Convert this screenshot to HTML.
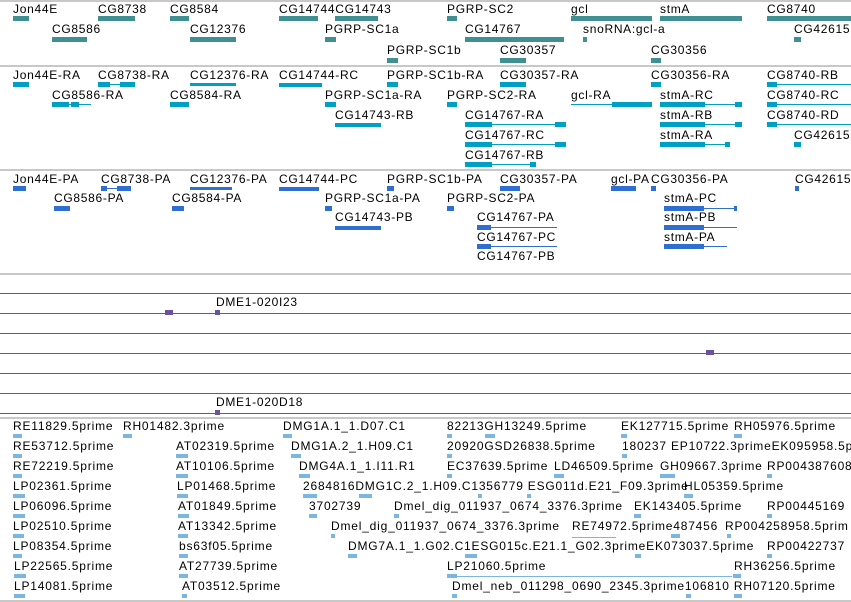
<!DOCTYPE html>
<html style="width:851px;height:602px;overflow:hidden"><head><meta charset="utf-8">
<style>
body{margin:0;width:851px;height:602px;background:#fff;position:relative;overflow:hidden;font-family:"Liberation Sans",sans-serif}
.l{position:absolute;font-size:12px;line-height:13px;white-space:nowrap;color:#000;letter-spacing:0.7px}
.e .l{letter-spacing:0.8px}
.b{position:absolute;height:5px}
.t1{background:#3f8f93}.t2{background:#00a0c4}.t3{background:#2f6fd2}.t5{background:#7ab6df}
.ln{position:absolute;height:1px}
.g{position:absolute;left:0;width:851px;height:2px;background:#c8c8c8}
.p{position:absolute;left:0;width:851px;height:1px;background:#6a52a0}
</style></head><body>
<div class="g" style="top:0"></div>
<div class="g" style="top:65px"></div>
<div class="g" style="top:169px"></div>
<div class="g" style="top:273px"></div>
<div class="g" style="top:417px"></div>
<div class="g" style="top:600px"></div>

<!-- track 1 -->
<div class="l" style="left:13px;top:3px">Jon44E</div><div class="b t1" style="left:13px;top:16px;width:16px"></div>
<div class="l" style="left:98px;top:3px">CG8738</div><div class="b t1" style="left:98px;top:16px;width:37px"></div>
<div class="l" style="left:170px;top:3px">CG8584</div><div class="b t1" style="left:170px;top:16px;width:19px"></div>
<div class="l" style="left:279px;top:3px">CG14744CG14743</div><div class="b t1" style="left:279px;top:16px;width:39px"></div><div class="b t1" style="left:335px;top:16px;width:43px"></div>
<div class="l" style="left:447px;top:3px">PGRP-SC2</div><div class="b t1" style="left:447px;top:16px;width:10px"></div>
<div class="l" style="left:571px;top:3px">gcl</div><div class="b t1" style="left:571px;top:16px;width:81px"></div>
<div class="l" style="left:660px;top:3px">stmA</div><div class="b t1" style="left:660px;top:16px;width:82px"></div>
<div class="l" style="left:767px;top:3px">CG8740</div><div class="b t1" style="left:767px;top:16px;width:84px"></div>
<div class="l" style="left:52px;top:23px">CG8586</div><div class="b t1" style="left:52px;top:37px;width:35px"></div>
<div class="l" style="left:190px;top:23px">CG12376</div><div class="b t1" style="left:190px;top:37px;width:46px"></div>
<div class="l" style="left:325px;top:23px">PGRP-SC1a</div><div class="b t1" style="left:325px;top:37px;width:11px"></div>
<div class="l" style="left:465px;top:23px">CG14767</div><div class="b t1" style="left:465px;top:37px;width:99px"></div>
<div class="l" style="left:583px;top:23px">snoRNA:gcl-a</div><div class="b t1" style="left:583px;top:37px;width:4px"></div>
<div class="l" style="left:794px;top:23px">CG42615</div><div class="b t1" style="left:794px;top:37px;width:7px"></div>
<div class="l" style="left:387px;top:44px">PGRP-SC1b</div><div class="b t1" style="left:387px;top:58px;width:11px"></div>
<div class="l" style="left:500px;top:44px">CG30357</div><div class="b t1" style="left:500px;top:58px;width:26px"></div>
<div class="l" style="left:651px;top:44px">CG30356</div><div class="b t1" style="left:651px;top:58px;width:10px"></div>

<!-- track 2 -->
<div class="l" style="left:13px;top:69px">Jon44E-RA</div><div class="b t2" style="left:13px;top:82px;width:16px"></div>
<div class="l" style="left:98px;top:69px">CG8738-RA</div><div class="b t2" style="left:98px;top:82px;width:12px"></div><div class="ln t2" style="left:110px;top:84px;width:10px"></div><div class="b t2" style="left:120px;top:82px;width:15px"></div>
<div class="l" style="left:190px;top:69px">CG12376-RA</div><div class="b t2" style="left:190px;top:83px;width:46px;height:3px"></div>
<div class="l" style="left:279px;top:69px">CG14744-RC</div><div class="b t2" style="left:279px;top:83px;width:43px;height:4px"></div>
<div class="l" style="left:387px;top:69px">PGRP-SC1b-RA</div><div class="b t2" style="left:387px;top:82px;width:11px"></div>
<div class="l" style="left:500px;top:69px">CG30357-RA</div><div class="b t2" style="left:500px;top:82px;width:26px"></div>
<div class="l" style="left:651px;top:69px">CG30356-RA</div><div class="b t2" style="left:651px;top:82px;width:10px"></div>
<div class="l" style="left:767px;top:69px">CG8740-RB</div><div class="b t2" style="left:767px;top:82px;width:10px"></div><div class="ln t2" style="left:777px;top:84px;width:74px"></div>
<div class="l" style="left:52px;top:89px">CG8586-RA</div><div class="b t2" style="left:52px;top:102px;width:17px"></div><div class="ln t2" style="left:69px;top:104px;width:22px"></div><div class="b t2" style="left:71px;top:102px;width:8px"></div>
<div class="l" style="left:170px;top:89px">CG8584-RA</div><div class="b t2" style="left:170px;top:102px;width:19px"></div>
<div class="l" style="left:325px;top:89px">PGRP-SC1a-RA</div><div class="b t2" style="left:325px;top:102px;width:11px"></div>
<div class="l" style="left:447px;top:89px">PGRP-SC2-RA</div><div class="b t2" style="left:447px;top:102px;width:10px"></div>
<div class="l" style="left:571px;top:89px">gcl-RA</div><div class="ln t2" style="left:571px;top:104px;width:81px"></div><div class="b t2" style="left:612px;top:102px;width:40px"></div>
<div class="l" style="left:660px;top:89px">stmA-RC</div><div class="ln t2" style="left:660px;top:104px;width:82px"></div><div class="b t2" style="left:660px;top:102px;width:45px"></div><div class="b t2" style="left:735px;top:102px;width:7px"></div>
<div class="l" style="left:767px;top:89px">CG8740-RC</div><div class="b t2" style="left:767px;top:102px;width:10px"></div><div class="ln t2" style="left:777px;top:104px;width:74px"></div>
<div class="l" style="left:335px;top:109px">CG14743-RB</div><div class="b t2" style="left:335px;top:123px;width:46px;height:4px"></div>
<div class="l" style="left:465px;top:109px">CG14767-RA</div><div class="b t2" style="left:465px;top:122px;width:27px"></div><div class="ln t2" style="left:492px;top:124px;width:74px"></div><div class="b t2" style="left:555px;top:122px;width:11px"></div>
<div class="l" style="left:660px;top:109px">stmA-RB</div><div class="ln t2" style="left:660px;top:124px;width:82px"></div><div class="b t2" style="left:660px;top:122px;width:45px"></div><div class="b t2" style="left:735px;top:122px;width:7px"></div>
<div class="l" style="left:767px;top:109px">CG8740-RD</div><div class="b t2" style="left:767px;top:122px;width:10px"></div><div class="ln t2" style="left:777px;top:124px;width:74px"></div>
<div class="l" style="left:465px;top:129px">CG14767-RC</div><div class="b t2" style="left:465px;top:142px;width:27px"></div><div class="ln t2" style="left:492px;top:144px;width:74px"></div><div class="b t2" style="left:555px;top:142px;width:11px"></div>
<div class="l" style="left:660px;top:129px">stmA-RA</div><div class="ln t2" style="left:660px;top:144px;width:70px"></div><div class="b t2" style="left:660px;top:142px;width:45px"></div><div class="b t2" style="left:725px;top:142px;width:5px"></div>
<div class="l" style="left:794px;top:129px">CG42615</div><div class="b t2" style="left:794px;top:142px;width:7px"></div>
<div class="l" style="left:465px;top:149px">CG14767-RB</div><div class="b t2" style="left:465px;top:162px;width:27px"></div><div class="ln t2" style="left:492px;top:164px;width:44px"></div><div class="b t2" style="left:530px;top:162px;width:6px"></div>

<!-- track 3 -->
<div class="l" style="left:13px;top:173px">Jon44E-PA</div><div class="b t3" style="left:13px;top:186px;width:13px"></div>
<div class="l" style="left:101px;top:173px">CG8738-PA</div><div class="b t3" style="left:101px;top:186px;width:6px"></div><div class="ln t3" style="left:107px;top:188px;width:10px"></div><div class="b t3" style="left:117px;top:186px;width:14px"></div>
<div class="l" style="left:190px;top:173px">CG12376-PA</div><div class="b t3" style="left:190px;top:187px;width:42px;height:3px"></div>
<div class="l" style="left:279px;top:173px">CG14744-PC</div><div class="b t3" style="left:279px;top:187px;width:40px;height:4px"></div>
<div class="l" style="left:387px;top:173px">PGRP-SC1b-PA</div><div class="b t3" style="left:387px;top:186px;width:7px"></div>
<div class="l" style="left:500px;top:173px">CG30357-PA</div><div class="b t3" style="left:500px;top:186px;width:20px"></div>
<div class="l" style="left:611px;top:173px">gcl-PA</div><div class="b t3" style="left:611px;top:186px;width:25px"></div>
<div class="l" style="left:651px;top:173px">CG30356-PA</div><div class="b t3" style="left:651px;top:186px;width:5px"></div>
<div class="l" style="left:795px;top:173px">CG42615</div><div class="b t3" style="left:795px;top:186px;width:4px"></div>
<div class="l" style="left:54px;top:192px">CG8586-PA</div><div class="b t3" style="left:54px;top:206px;width:16px"></div>
<div class="l" style="left:172px;top:192px">CG8584-PA</div><div class="b t3" style="left:172px;top:206px;width:12px"></div>
<div class="l" style="left:325px;top:192px">PGRP-SC1a-PA</div><div class="b t3" style="left:325px;top:206px;width:7px"></div>
<div class="l" style="left:447px;top:192px">PGRP-SC2-PA</div><div class="b t3" style="left:447px;top:206px;width:7px"></div>
<div class="l" style="left:664px;top:192px">stmA-PC</div><div class="ln t3" style="left:664px;top:208px;width:73px"></div><div class="b t3" style="left:664px;top:206px;width:40px"></div><div class="b t3" style="left:734px;top:206px;width:3px"></div>
<div class="l" style="left:335px;top:211px">CG14743-PB</div><div class="b t3" style="left:335px;top:226px;width:46px;height:4px"></div>
<div class="l" style="left:477px;top:211px">CG14767-PA</div><div class="b t3" style="left:477px;top:225px;width:14px"></div><div class="ln t3" style="left:491px;top:227px;width:66px"></div>
<div class="l" style="left:664px;top:211px">stmA-PB</div><div class="ln t3" style="left:664px;top:227px;width:73px"></div><div class="b t3" style="left:664px;top:225px;width:40px"></div>
<div class="l" style="left:477px;top:231px">CG14767-PC</div><div class="b t3" style="left:477px;top:244px;width:14px"></div><div class="ln t3" style="left:491px;top:246px;width:66px"></div>
<div class="l" style="left:664px;top:231px">stmA-PA</div><div class="ln t3" style="left:664px;top:246px;width:63px"></div><div class="b t3" style="left:664px;top:244px;width:40px"></div>
<div class="l" style="left:477px;top:250px">CG14767-PB</div>

<!-- track 4 -->
<div class="p" style="top:293px"></div>
<div class="p" style="top:313px"></div>
<div class="b" style="left:165px;top:310px;width:8px;background:#6a52a0"></div>
<div class="l" style="left:216px;top:296px">DME1-020I23</div>
<div class="b" style="left:215px;top:310px;width:5px;background:#6a52a0"></div>
<div class="p" style="top:333px"></div>
<div class="p" style="top:353px"></div>
<div class="b" style="left:706px;top:350px;width:8px;background:#6a52a0"></div>
<div class="p" style="top:373px"></div>
<div class="p" style="top:393px"></div>
<div class="l" style="left:216px;top:396px">DME1-020D18</div>
<div class="p" style="top:413px"></div>
<div class="b" style="left:215px;top:410px;width:5px;background:#6a52a0"></div>

<!-- track 5 -->
<div class="e">
<div class="l" style="left:13px;top:420px">RE11829.5prime</div>
<div class="l" style="left:123px;top:420px">RH01482.3prime</div>
<div class="l" style="left:283px;top:420px">DMG1A.1_1.D07.C1</div>
<div class="l" style="left:447px;top:420px">82213GH13249.5prime</div>
<div class="l" style="left:621px;top:420px">EK127715.5prime</div>
<div class="l" style="left:734px;top:420px">RH05976.5prime</div>
<div class="l" style="left:13px;top:440px">RE53712.5prime</div>
<div class="l" style="left:176px;top:440px">AT02319.5prime</div>
<div class="l" style="left:291px;top:440px">DMG1A.2_1.H09.C1</div>
<div class="l" style="left:447px;top:440px">20920GSD26838.5prime</div>
<div class="l" style="left:622px;top:440px">180237 EP10722.3primeEK095958.5p</div>
<div class="l" style="left:13px;top:460px">RE72219.5prime</div>
<div class="l" style="left:176px;top:460px">AT10106.5prime</div>
<div class="l" style="left:299px;top:460px">DMG4A.1_1.I11.R1</div>
<div class="l" style="left:447px;top:460px">EC37639.5prime</div>
<div class="l" style="left:554px;top:460px">LD46509.5prime</div>
<div class="l" style="left:660px;top:460px">GH09667.3prime</div>
<div class="l" style="left:767px;top:460px">RP004387608</div>
<div class="l" style="left:13px;top:480px">LP02361.5prime</div>
<div class="l" style="left:177px;top:480px">LP01468.5prime</div>
<div class="l" style="left:303px;top:480px">2684816DMG1C.2_1.H09.C1356779 ESG011d.E21_F09.3prime</div>
<div class="l" style="left:684px;top:480px">HL05359.5prime</div>
<div class="l" style="left:13px;top:500px">LP06096.5prime</div>
<div class="l" style="left:178px;top:500px">AT01849.5prime</div>
<div class="l" style="left:309px;top:500px">3702739</div>
<div class="l" style="left:394px;top:500px">Dmel_dig_011937_0674_3376.3prime</div>
<div class="l" style="left:634px;top:500px">EK143405.5prime</div>
<div class="l" style="left:767px;top:500px">RP00445169</div>
<div class="l" style="left:13px;top:520px">LP02510.5prime</div>
<div class="l" style="left:178px;top:520px">AT13342.5prime</div>
<div class="l" style="left:331px;top:520px">Dmel_dig_011937_0674_3376.3prime</div>
<div class="l" style="left:572px;top:520px">RE74972.5prime487456</div>
<div class="l" style="left:725px;top:520px">RP004258958.5prim</div>
<div class="l" style="left:13px;top:540px">LP08354.5prime</div>
<div class="l" style="left:179px;top:540px">bs63f05.5prime</div>
<div class="l" style="left:348px;top:540px">DMG7A.1_1.G02.C1ESG015c.E21.1_G02.3primeEK073037.5prime</div>
<div class="l" style="left:767px;top:540px">RP00422737</div>
<div class="l" style="left:14px;top:560px">LP22565.5prime</div>
<div class="l" style="left:179px;top:560px">AT27739.5prime</div>
<div class="l" style="left:447px;top:560px">LP21060.5prime</div>
<div class="l" style="left:734px;top:560px">RH36256.5prime</div>
<div class="l" style="left:14px;top:580px">LP14081.5prime</div>
<div class="l" style="left:182px;top:580px">AT03512.5prime</div>
<div class="l" style="left:452px;top:580px">Dmel_neb_011298_0690_2345.3prime106810 RH07120.5prime</div>
</div>
<!-- track5 glyphs -->
<div class="b t5" style="left:13px;top:434px;width:9px;height:4px"></div>
<div class="b t5" style="left:123px;top:434px;width:9px;height:4px"></div>
<div class="b t5" style="left:283px;top:434px;width:9px;height:4px"></div>
<div class="b t5" style="left:447px;top:434px;width:5px;height:4px"></div>
<div class="b t5" style="left:485px;top:434px;width:10px;height:4px"></div>
<div class="b t5" style="left:621px;top:434px;width:6px;height:4px"></div>
<div class="b t5" style="left:734px;top:434px;width:8px;height:4px"></div>
<div class="b t5" style="left:13px;top:454px;width:9px;height:4px"></div>
<div class="b t5" style="left:176px;top:454px;width:12px;height:4px"></div>
<div class="b t5" style="left:291px;top:454px;width:10px;height:4px"></div>
<div class="b t5" style="left:447px;top:454px;width:5px;height:4px"></div>
<div class="b t5" style="left:622px;top:454px;width:5px;height:4px"></div>
<div class="b t5" style="left:13px;top:474px;width:9px;height:4px"></div>
<div class="b t5" style="left:176px;top:474px;width:12px;height:4px"></div>
<div class="b t5" style="left:299px;top:474px;width:11px;height:4px"></div>
<div class="b t5" style="left:447px;top:474px;width:5px;height:4px"></div>
<div class="b t5" style="left:554px;top:474px;width:10px;height:4px"></div>
<div class="b t5" style="left:660px;top:474px;width:15px;height:4px"></div>
<div class="b t5" style="left:767px;top:474px;width:5px;height:4px"></div>
<div class="b t5" style="left:13px;top:494px;width:12px;height:4px"></div>
<div class="b t5" style="left:177px;top:494px;width:11px;height:4px"></div>
<div class="b t5" style="left:303px;top:494px;width:14px;height:4px"></div>
<div class="b t5" style="left:359px;top:494px;width:13px;height:4px"></div>
<div class="b t5" style="left:478px;top:494px;width:4px;height:4px"></div>
<div class="b t5" style="left:527px;top:494px;width:4px;height:4px"></div>
<div class="b t5" style="left:684px;top:494px;width:9px;height:4px"></div>
<div class="b t5" style="left:13px;top:514px;width:12px;height:4px"></div>
<div class="b t5" style="left:178px;top:514px;width:11px;height:4px"></div>
<div class="b t5" style="left:309px;top:514px;width:8px;height:4px"></div>
<div class="b t5" style="left:394px;top:514px;width:5px;height:4px"></div>
<div class="b t5" style="left:634px;top:514px;width:7px;height:4px"></div>
<div class="b t5" style="left:767px;top:514px;width:5px;height:4px"></div>
<div class="b t5" style="left:13px;top:534px;width:11px;height:4px"></div>
<div class="b t5" style="left:178px;top:534px;width:10px;height:4px"></div>
<div class="b t5" style="left:331px;top:534px;width:4px;height:4px"></div>
<div class="ln t5" style="left:572px;top:537px;width:44px"></div>
<div class="b t5" style="left:671px;top:534px;width:9px;height:4px"></div>
<div class="b t5" style="left:727px;top:534px;width:4px;height:4px"></div>
<div class="b t5" style="left:13px;top:554px;width:9px;height:4px"></div>
<div class="b t5" style="left:179px;top:554px;width:9px;height:4px"></div>
<div class="b t5" style="left:348px;top:554px;width:9px;height:4px"></div>
<div class="b t5" style="left:465px;top:554px;width:12px;height:4px"></div>
<div class="b t5" style="left:635px;top:554px;width:6px;height:4px"></div>
<div class="b t5" style="left:767px;top:554px;width:5px;height:4px"></div>
<div class="b t5" style="left:14px;top:574px;width:12px;height:4px"></div>
<div class="b t5" style="left:179px;top:574px;width:9px;height:4px"></div>
<div class="ln t5" style="left:447px;top:576px;width:285px"></div>
<div class="b t5" style="left:447px;top:574px;width:10px;height:4px"></div>
<div class="b t5" style="left:733px;top:574px;width:8px;height:4px"></div>
<div class="b t5" style="left:14px;top:594px;width:11px;height:4px"></div>
<div class="b t5" style="left:182px;top:594px;width:5px;height:4px"></div>
<div class="b t5" style="left:452px;top:594px;width:5px;height:4px"></div>
<div class="b t5" style="left:686px;top:594px;width:5px;height:4px"></div>
<div class="b t5" style="left:734px;top:594px;width:8px;height:4px"></div>
</body></html>
